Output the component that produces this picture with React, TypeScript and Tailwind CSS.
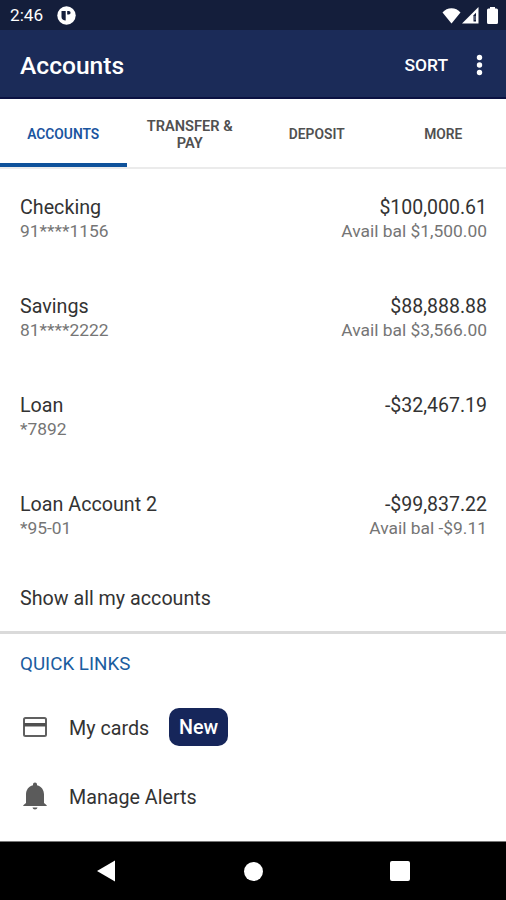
import React from 'react';

interface Account {
  name: string;
  number: string;
  balance: string;
  available?: string;
}

const TABS = ['ACCOUNTS', 'TRANSFER & PAY', 'DEPOSIT', 'MORE'];

const ACCOUNTS: Account[] = [
  { name: 'Checking', number: '91****1156', balance: '$100,000.61', available: 'Avail bal $1,500.00' },
  { name: 'Savings', number: '81****2222', balance: '$88,888.88', available: 'Avail bal $3,566.00' },
  { name: 'Loan', number: '*7892', balance: '-$32,467.19' },
  { name: 'Loan Account 2', number: '*95-01', balance: '-$99,837.22', available: 'Avail bal -$9.11' },
];

const StatusBar: React.FC = () => (
  <div className="flex h-[30px] shrink-0 items-center bg-[#141e3b] pr-[8px] pl-[10px] pt-px text-white">
    <span className="pt-px text-[17.2px]">2:46</span>
    <svg className="ml-[14px]" width="19" height="19" viewBox="0 0 19 19">
      <circle cx="9.5" cy="9.5" r="9.2" fill="#fff" />
      <path d="M4.5 5h4.2v9.5c-2.4 0-4.2-1.2-4.2-3.5zM10.2 5h1.6a1.8 1.8 0 0 1 0 3.6h-1.6z" fill="#141e3b" />
    </svg>
    <div className="ml-auto flex items-center">
      <svg width="19" height="17" viewBox="0 0 19 17" fill="#fff">
        <path d="M9.5 16.5.5 5.500C5-.3 14-.3 18.500 5.500z" />
      </svg>
      <svg className="ml-px" width="17" height="17" viewBox="0 0 17 17">
        <path d="M0 16.500 16.500 0v16.500z" fill="#fff" />
        <path d="M11.500 8.300 14 5.800v8.700h-2.500z" fill="#141e3b" />
        <path d="M12.500 9h1v4h-1z" fill="#8b91a5" />
      </svg>
      <svg className="ml-[8px]" width="11" height="17" viewBox="0 0 11 17" fill="#fff">
        <path d="M3 0h5v1.500h1.500A1.500 1.500 0 0 1 11 3v12.500a1.500 1.500 0 0 1-1.500 1.500h-8A1.500 1.500 0 0 1 0 15.500V3a1.500 1.500 0 0 1 1.500-1.500H3z" />
      </svg>
    </div>
  </div>
);

const AppBar: React.FC = () => (
  <header className="flex h-[69px] shrink-0 items-center border-b-2 border-[#0b1242] bg-[#1b2b58] pr-[23px] pl-5 pt-[3px] text-white">
    <h1 className="pt-0.5 text-[24.6px] font-medium">Accounts</h1>
    <button className="ml-auto text-[17.4px] font-medium">SORT</button>
    <svg className="ml-[28px]" width="7" height="22" viewBox="0 0 7 22" fill="#fff">
      <circle cx="3.5" cy="3.5" r="2.7" />
      <circle cx="3.5" cy="11" r="2.7" />
      <circle cx="3.5" cy="18.5" r="2.7" />
    </svg>
  </header>
);

const TabBar: React.FC = () => (
  <nav className="grid h-[70px] shrink-0 grid-cols-4 border-b-2 border-[#ebebeb]">
    {TABS.map((tab, i) => (
      <button
        key={tab}
        className={
          i === 0
            ? 'relative flex items-center justify-center pt-[3px] text-[13.8px] leading-[17px] font-semibold text-[#1b559f]'
            : i === 1
              ? 'flex items-center justify-center px-4 pt-[3px] text-[14.6px] leading-[17px] font-semibold text-[#505050]'
              : 'flex items-center justify-center pt-[3px] pl-px text-[13.8px] leading-[17px] font-semibold text-[#505050]'
        }
      >
        {tab}
        {i === 0 && <span className="absolute right-0 bottom-0 left-0 h-1 bg-[#0f529b]" />}
      </button>
    ))}
  </nav>
);

const AccountRow: React.FC<{ account: Account }> = ({ account }) => (
  <li className="flex h-[99px] justify-between pt-[26px] pr-[19px] pl-5">
    <div>
      <p className="text-[19.7px] leading-[26px] text-[#333]">{account.name}</p>
      <p className="text-[17.4px] leading-[21px] text-[#757575]">{account.number}</p>
    </div>
    <div className="text-right">
      <p className="text-[19.5px] leading-[26px] text-[#333]">{account.balance}</p>
      {account.available && <p className="text-[17.4px] leading-[21px] text-[#757575]">{account.available}</p>}
    </div>
  </li>
);

const NavBar: React.FC = () => (
  <footer className="flex h-[59px] shrink-0 items-center justify-between border-t border-[#777] bg-black pr-[96px] pl-[97px]">
    <svg width="18" height="22" viewBox="0 0 18 22" fill="#fff">
      <path d="M18 .5v21L0 11z" />
    </svg>
    <span className="ml-0.5 size-[19px] rounded-full bg-white" />
    <span className="size-5 rounded-[2px] bg-white" />
  </footer>
);

export default function App() {
  return (
    <div className="flex h-[900px] w-[506px] flex-col overflow-hidden bg-white font-['Roboto',sans-serif]">
      <StatusBar />
      <AppBar />
      <TabBar />

      <main className="flex-1">
        <ul>
          {ACCOUNTS.map((account) => (
            <AccountRow key={account.name} account={account} />
          ))}
        </ul>
        <div className="flex h-[69px] items-center border-b-[3px] border-[#dadada] pt-0.5 pl-5 text-[19.7px] text-[#333]">
          Show all my accounts
        </div>

        {/* Quick Links */}
        <h2 className="flex h-[59px] items-center pt-0.5 pl-5 text-[18.8px] text-[#1b5d9f]">QUICK LINKS</h2>
        <div className="flex h-[69px] items-center pl-[23px] text-[19.7px] text-[#333]">
          <svg className="mb-0.5" width="24" height="20" viewBox="0 0 24 20">
            <rect x="1" y="1" width="22" height="18" rx="1.5" fill="none" stroke="#606060" strokeWidth="2" />
            <path d="M1 6h22v3.500H1z" fill="#505050" />
          </svg>
          <span className="ml-[22px] pt-0.5">My cards</span>
          <span className="mb-px ml-5 flex h-[38px] w-[59px] items-center justify-center rounded-[10px] bg-[#16265a] pt-0.5 font-medium text-white">
            New
          </span>
        </div>
        <div className="flex h-[69px] items-center pl-[23px] text-[19.7px] text-[#333]">
          <svg className="mb-0.5" width="24" height="28" viewBox="0 0 24 28" fill="#5b5b5b">
            <path d="M12 .5c1.200 0 2 .9 2 2v.7c4.500 1.100 7 4.800 7 9.300v8.500l2.700 2.200v.8H.3v-.8L3 21v-8.500c0-4.500 2.500-8.200 7-9.300v-.7c0-1.100.8-2 2-2zM9.500 25.500h5c-.3 1.300-1.200 2-2.500 2s-2.200-.7-2.500-2z" />
          </svg>
          <span className="ml-[22px] pt-0.5">Manage Alerts</span>
        </div>
      </main>

      <NavBar />
    </div>
  );
}
